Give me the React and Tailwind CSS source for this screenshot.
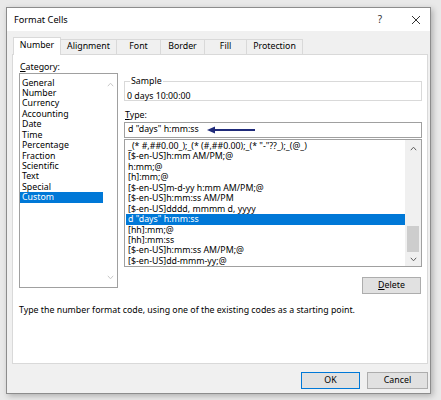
import React from "react";

const categories = ["General","Number","Currency","Accounting","Date","Time","Percentage","Fraction","Scientific","Text","Special","Custom"];
const formats = [
  '_(* #,##0.00_);_(* (#,##0.00);_(* "-"??_);_(@_)',
  '[$-en-US]h:mm AM/PM;@',
  'h:mm;@',
  '[h]:mm;@',
  '[$-en-US]m-d-yy h:mm AM/PM;@',
  '[$-en-US]h:mm:ss AM/PM',
  '[$-en-US]dddd, mmmm d, yyyy',
  'd "days" h:mm:ss',
  '[hh]:mm;@',
  '[hh]:mm:ss',
  '[$-en-US]h:mm:ss AM/PM;@',
  '[$-en-US]dd-mmm-yy;@',
];

function Chevron({ up, color }) {
  return (
    <svg width="7" height="5" viewBox="0 0 7 5">
      <path d={up ? "M0.8 4.2 L3.5 1.2 L6.2 4.2" : "M0.8 0.8 L3.5 3.8 L6.2 0.8"} fill="none" stroke={color} strokeWidth="1" />
    </svg>
  );
}

function Tab({ label, selected, w, first }) {
  if (selected) {
    return (
      <div className={`relative z-10 ${w} h-[18px] -mb-px bg-white border-x border-t border-[#d9d9d9] flex items-center justify-center pb-[1px]`}>
        {label}
      </div>
    );
  }
  return (
    <div className={`${w} ${first ? "" : "-ml-px"} h-[15px] bg-[#f0f0f0] border-x border-t border-[#d9d9d9] flex items-center justify-center`}>
      {label}
    </div>
  );
}

export default function App() {
  return (
    <div className="w-[441px] h-[400px] bg-[#e9e9e9] pt-[7px] pl-[6px] font-['Noto_Sans',sans-serif] text-[8.8px] text-black overflow-hidden">
      <div className="w-[425px] h-[387px] border border-[#8c8c8c] bg-[#f0f0f0] flex flex-col shadow-[2px_2px_6px_rgba(0,0,0,0.25)]">
        {/* title bar */}
        <div className="h-[23px] bg-white flex items-center pl-[7px] pr-[9px]">
          <span className="text-[9.2px]">Format Cells</span>
          <span className="ml-auto text-[10px] text-[#333] mr-[29px]">?</span>
          <svg width="10" height="10" viewBox="0 0 10 10">
            <path d="M1 1 L9 9 M9 1 L1 9" stroke="#333" strokeWidth="1" />
          </svg>
        </div>
        {/* body */}
        <div className="flex-1 flex flex-col pl-[5px] pr-[2px]">
          <div className="mt-[6px] h-[17px] pl-[1px] flex items-end">
            <Tab label="Number" selected w="w-[48px]" />
            <Tab label="Alignment" w="w-[57px]" />
            <Tab label="Font" w="w-[45px]" />
            <Tab label="Border" w="w-[45px]" />
            <Tab label="Fill" w="w-[43px]" />
            <Tab label="Protection" w="w-[57px]" />
          </div>
          <div className="w-[416px] h-[310px] bg-white border border-[#d9d9d9] pt-[6px] pl-[6px]">
            <div className="flex">
              {/* left column */}
              <div className="flex flex-col">
                <div className="h-[12px] leading-[12px] ml-[1px]"><span className="underline">C</span>ategory:</div>
                <div className="w-[99px] h-[215px] border border-[#a0a0a0] flex">
                  <div className="flex-1 pt-[3.5px]">
                    {categories.map((c) => (
                      <div key={c} className={`h-[10.45px] leading-[10.45px] pl-[2px] ${c === "Custom" ? "bg-[#0078d7] text-white" : ""}`}>{c}</div>
                    ))}
                  </div>
                  <div className="w-[14px] flex flex-col items-center justify-between pt-[8px] pb-[7px]">
                    <Chevron up color="#c8c8c8" />
                    <Chevron color="#c8c8c8" />
                  </div>
                </div>
              </div>
              {/* right column */}
              <div className="ml-[6px] w-[298px] flex flex-col">
                <fieldset className="mt-[14px] border border-[#d9d9d9] h-[26px]">
                  <legend className="ml-[5px] px-[1px] leading-[12px]">Sample</legend>
                  <div className="pl-[2px] pt-[4px] leading-[10px]">0 days 10:00:00</div>
                </fieldset>
                <div className="mt-[8px] h-[12px] leading-[12px] ml-[1px]"><span className="underline">T</span>ype:</div>
                <div className="mt-[1px] h-[16px] border border-[#a0a0a0] flex items-center pl-[3px]">
                  <span>d "days" h:mm:ss</span>
                  <svg className="ml-[8px]" width="49" height="8" viewBox="0 0 49 8">
                    <path d="M7 4 L48 4" stroke="#1f2a7a" strokeWidth="2" />
                    <path d="M0 4 L8 0.5 L8 7.5 Z" fill="#1f2a7a" />
                  </svg>
                </div>
                <div className="mt-[1px] h-[128px] border border-[#a0a0a0] flex">
                  <div className="flex-1 pt-[1px] pl-[1px] overflow-hidden">
                    {formats.map((f) => (
                      <div key={f} className={`h-[10.45px] leading-[10.45px] pl-[2px] whitespace-pre ${f === 'd "days" h:mm:ss' ? "bg-[#0078d7] text-white" : ""}`}>{f}</div>
                    ))}
                  </div>
                  <div className="w-[16px] bg-[#f0f0f0] flex flex-col items-center pt-[6px] pb-[4px]">
                    <Chevron up color="#606060" />
                    <div className="flex-1 w-full flex flex-col justify-end pb-[5px] px-[2px]">
                      <div className="h-[26px] bg-[#cdcdcd]" />
                    </div>
                    <Chevron color="#606060" />
                  </div>
                </div>
                <div className="mt-[10px] self-end mr-[1px] w-[59px] h-[17px] bg-[#e1e1e1] border border-[#adadad] flex items-center justify-center">
                  <span><span className="underline">D</span>elete</span>
                </div>
              </div>
            </div>
            <div className="mt-[10px] leading-[12px]">Type the number format code, using one of the existing codes as a starting point.</div>
          </div>
          <div className="mt-[8px] flex justify-end gap-[7px] pr-[0px]">
            <div className="w-[59px] h-[17px] bg-[#e1e1e1] border-[1.5px] border-[#0078d7] flex items-center justify-center">OK</div>
            <div className="w-[61px] h-[17px] bg-[#e1e1e1] border border-[#adadad] flex items-center justify-center">Cancel</div>
          </div>
        </div>
      </div>
    </div>
  );
}
